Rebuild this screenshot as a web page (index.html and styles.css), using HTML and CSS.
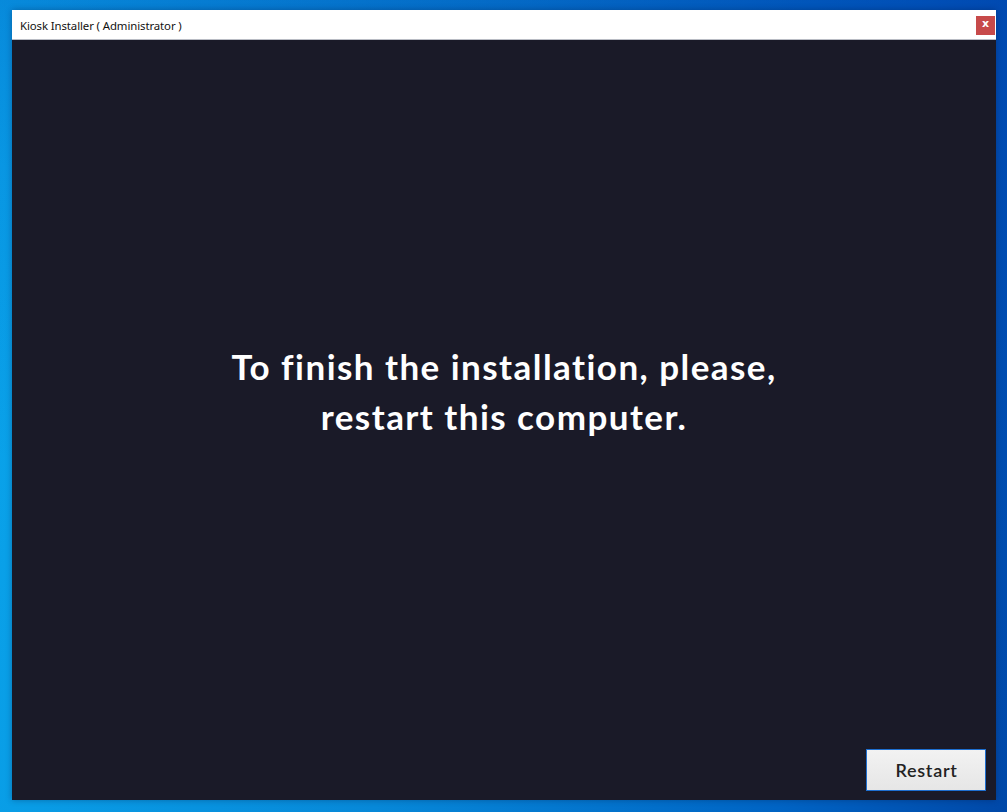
FILE: index.html
```html
<!DOCTYPE html>
<html lang="en">
<head>
<meta charset="utf-8">
<title>Kiosk Installer</title>
<link rel="stylesheet" href="styles.css">
</head>
<body>
<div class="desktop">
  <div class="window">
    <div class="titlebar">
      <span class="title">Kiosk Installer ( Administrator )</span>
      <button class="close" type="button" aria-label="Close">x</button>
    </div>
    <div class="content">
      <div class="message">
        <p>To finish the installation, please,<br>restart this computer.</p>
      </div>
      <div class="actions">
        <button class="restart" type="button">Restart</button>
      </div>
    </div>
  </div>
</div>
</body>
</html>
```
FILE: styles.css
```css
html, body {
  margin: 0;
  padding: 0;
  width: 1007px;
  height: 812px;
  overflow: hidden;
}

.desktop {
  width: 1007px;
  height: 812px;
  box-sizing: border-box;
  padding: 10px 0 0 12px;
  background:
    linear-gradient(200deg, rgba(0, 60, 170, 0.55) 0%, rgba(0, 70, 180, 0.15) 45%, rgba(0, 0, 0, 0) 70%),
    linear-gradient(100deg, #0aa6ec 0%, #0788d8 45%, #0064c4 80%, #0048a8 100%);
}

.window {
  width: 984px;
  height: 790px;
  display: flex;
  flex-direction: column;
  background: #1a1a28;
  box-shadow: 0 0 6px rgba(0, 20, 60, 0.35);
}

.titlebar {
  height: 29px;
  flex: 0 0 29px;
  background: #ffffff;
  border-bottom: 1px solid #b9bcc4;
  display: flex;
  align-items: center;
  justify-content: space-between;
  padding: 0 1px 0 8px;
}

.title {
  font-family: "Noto Sans", "Open Sans", sans-serif;
  font-size: 11.4px;
  color: #111;
  letter-spacing: -0.1px;
  padding-top: 1px;
}

.close {
  width: 19px;
  height: 19px;
  margin-top: 2px;
  border: none;
  padding: 0 0 3px 0;
  background: #c74a4a;
  color: #ffffff;
  font-family: "DejaVu Sans", sans-serif;
  font-weight: bold;
  font-size: 11px;
  line-height: 16px;
  cursor: pointer;
}

.content {
  flex: 1;
  display: flex;
  flex-direction: column;
}

.message {
  flex: 1;
  display: flex;
  align-items: center;
  justify-content: center;
  padding-bottom: 8px;
}

.message p {
  margin: 0;
  font-family: "Lato", "Noto Sans", sans-serif;
  font-weight: 700;
  font-size: 35px;
  line-height: 50px;
  letter-spacing: 1.45px;
  font-variant-ligatures: none;
  color: #ffffff;
  text-align: center;
}

.actions {
  display: flex;
  justify-content: flex-end;
  padding: 0 10px 9px 0;
}

.restart {
  width: 120px;
  height: 42px;
  box-sizing: border-box;
  border: 1px solid #1e6fd0;
  background: linear-gradient(#f2f2f2, #e6e6e6);
  color: #222;
  font-family: "Lato", "Noto Sans", sans-serif;
  font-weight: 600;
  font-size: 18px;
  letter-spacing: 0.7px;
  padding: 0 0 0 1px;
  cursor: pointer;
}
```
